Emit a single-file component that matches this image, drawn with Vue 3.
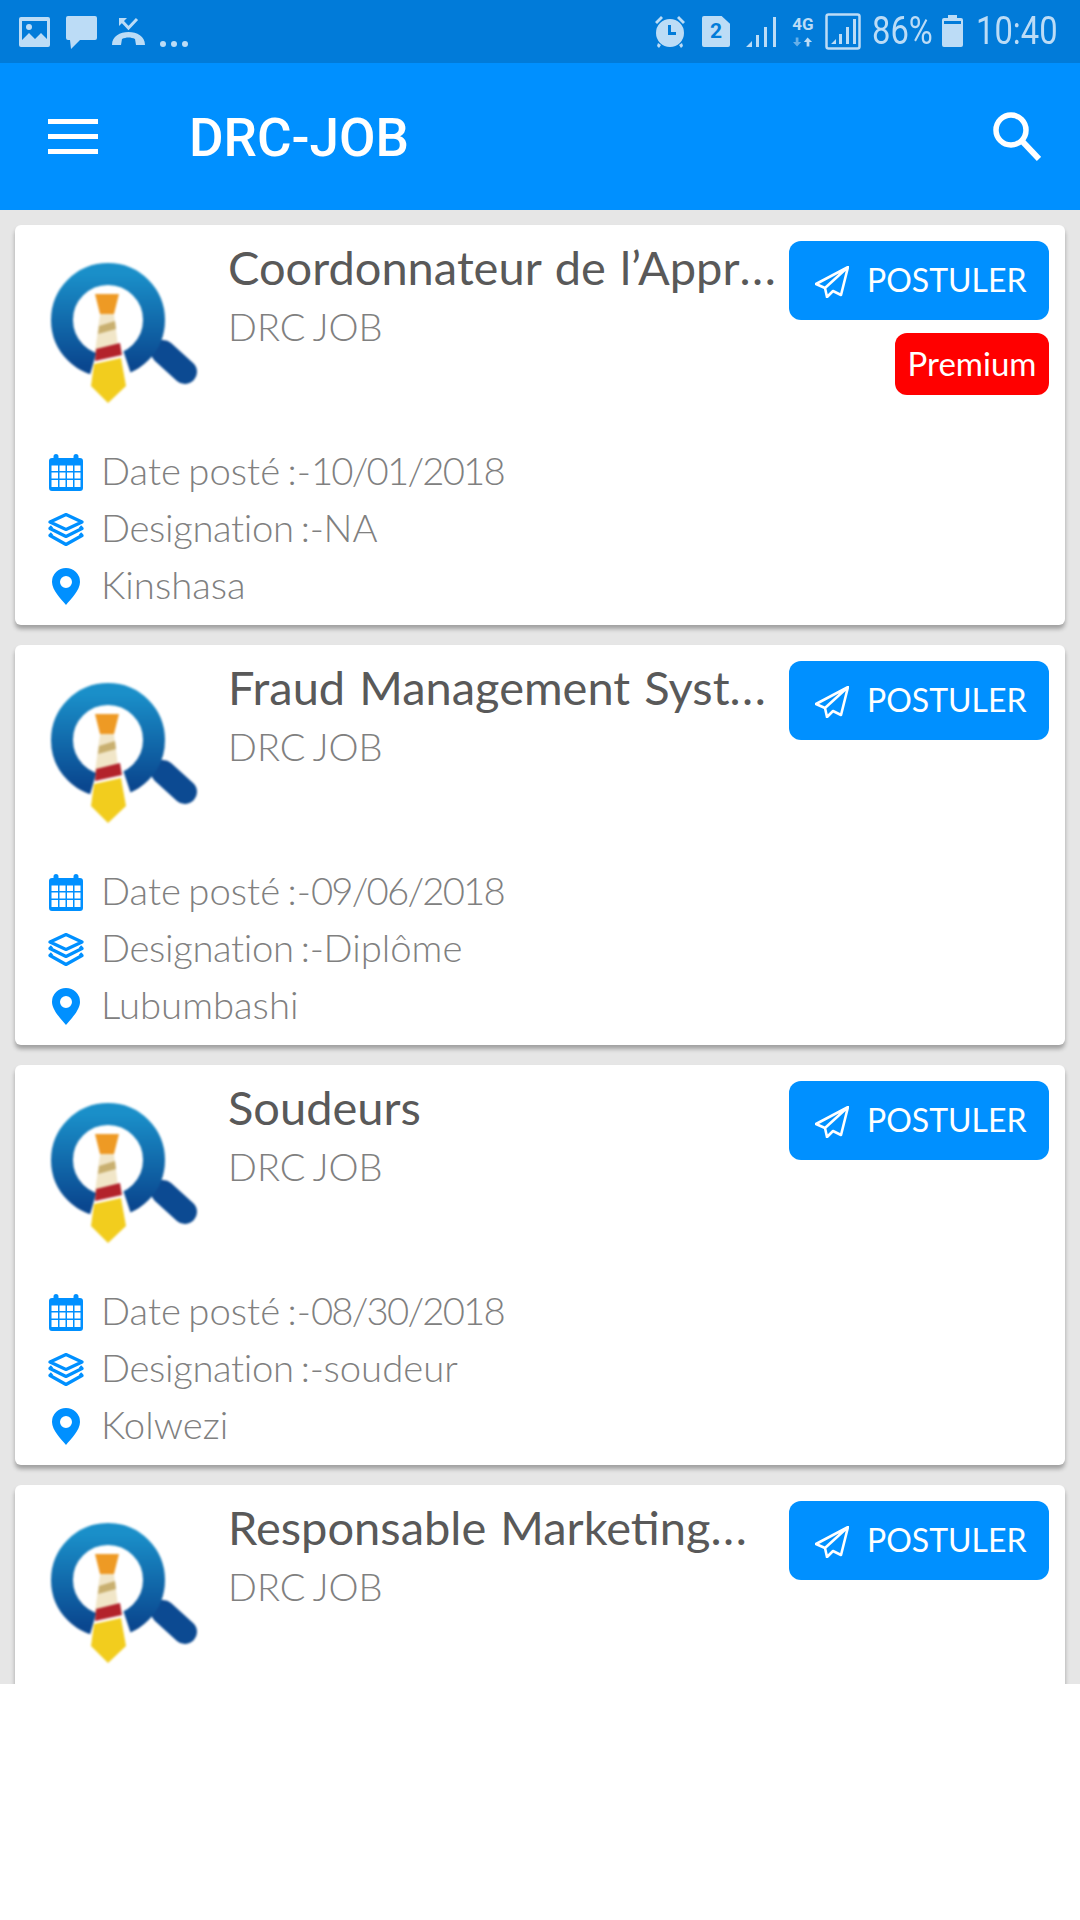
<script setup>
const jobs = [
  { id: 'a', title: 'Coordonnateur de l’Appr', more: true, date: '10/01/2018', designation: 'NA', city: 'Kinshasa', premium: true, rows: true },
  { id: 'b', title: 'Fraud Management Syst', more: true, date: '09/06/2018', designation: 'Diplôme', city: 'Lubumbashi', premium: false, rows: true },
  { id: 'c', title: 'Soudeurs', more: false, date: '08/30/2018', designation: 'soudeur', city: 'Kolwezi', premium: false, rows: true },
  { id: 'd', title: 'Responsable Marketing', more: true, premium: false, rows: false }
]
</script>

<template>
  <div class="screen">
    <div class="status">
      <div class="status-left">
        <svg class="s-pic" viewBox="0 0 31 30"><path fill-rule="evenodd" d="M2 0h27a2 2 0 0 1 2 2v26a2 2 0 0 1-2 2H2a2 2 0 0 1-2-2V2a2 2 0 0 1 2-2zM3 4v19l7-7 6 6 6-6 6 6V4z"/><circle cx="10" cy="10" r="3"/></svg>
        <svg class="s-msg" viewBox="0 0 31 33"><path d="M2 0h27a2 2 0 0 1 2 2v20a2 2 0 0 1-2 2H14l-9 9-1-9H2a2 2 0 0 1-2-2V2a2 2 0 0 1 2-2z"/></svg>
        <svg class="s-call" viewBox="0 0 33 29"><path d="M7 1h8l-8 8z"/><path d="M9 3l7.500 8L25 2" fill="none" stroke="#bcdcf6" stroke-width="3"/><path d="M0 28c0-9 8-13 16.500-13S33 19 33 28h-9l-1-6c-4-2-9-2-13 0l-1 6z"/></svg>
        <span class="dots"><i></i><i></i><i></i></span>
      </div>
      <div class="status-right">
        <svg class="s-alarm" viewBox="0 0 32 33"><path d="M1 7l6-6 2 2-6 6zM31 7l-6-6-2 2 6 6z"/><path fill-rule="evenodd" d="M16 4a14 14 0 1 1 0 28 14 14 0 0 1 0-28zM14 10v10h8v-3h-5v-7z"/><path d="M4 28l3 2-2 3-2-2zM28 28l-3 2 2 3 2-2z"/></svg>
        <span class="sim">2</span>
        <svg class="s-sig" viewBox="0 0 32 31"><path d="M0 31l6-6v6zM10 31V19h3v12zM18 31V11h3v20zM27 31V1h3v30z"/></svg>
        <span class="net"><b>4G</b><svg viewBox="0 0 22 10"><path class="dim" d="M3 0h3v5h3l-4.500 5L0 5h3z"/><path d="M16 0l5 5h-3v5h-3V5h-3z"/></svg></span>
        <svg class="s-box" viewBox="0 0 36 37"><rect x="1.500" y="1.500" width="33" height="34" rx="2" fill="none" stroke="#bcdcf6" stroke-width="2.500"/><path d="M6 31l5-5v5zM14 31V21h3v10zM21 31V14h3v17zM28 31V6h3v25z"/></svg>
        <span class="pct">86%</span>
        <svg class="s-bat" viewBox="0 0 21 32"><path fill-rule="evenodd" d="M6 0h9v3h4a2 2 0 0 1 2 2v25a2 2 0 0 1-2 2H2a2 2 0 0 1-2-2V5a2 2 0 0 1 2-2h4zM2 6v3h17V6z"/></svg>
        <span class="time">10:40</span>
      </div>
    </div>

    <header class="appbar">
      <button class="menu" aria-label="Menu"><i></i><i></i><i></i></button>
      <h1>DRC-JOB</h1>
      <svg class="search" viewBox="0 0 48 50"><circle cx="18" cy="18" r="15" fill="none" stroke="#fff" stroke-width="5.500"/><path d="M29 29l17 18" stroke="#fff" stroke-width="6" fill="none"/></svg>
    </header>

    <main class="list">
      <article v-for="job in jobs" :key="job.id" class="card">
        <div class="top">
          <svg class="logo" viewBox="0 0 170 190">
            <defs>
              <linearGradient :id="'ring' + job.id" x1="0" y1="0" x2="0" y2="1">
                <stop offset="0" stop-color="#1a8fc9"/>
                <stop offset="1" stop-color="#0a478f"/>
              </linearGradient>
            </defs>
            <g class="soft">
              <path d="M133 110l22 20" stroke="#0c4a92" stroke-width="24" stroke-linecap="round"/>
              <circle cx="78" cy="78" r="46" fill="none" :stroke="'url(#ring' + job.id + ')'" stroke-width="22"/>
              <path d="M55 150l13-45 2-58h16l6 58 15 45-28 20z" fill="#fff"/>
              <path d="M65 52h24l-5 20H70z" fill="#ee9a24"/>
              <path d="M70 72h14l4 32-23 6z" fill="#f1e6c8"/>
              <path d="M69 84l16-5 1 8-18 5z" fill="#c9b070"/>
              <path d="M66 107l24-6 2 12-27 6z" fill="#b3232b"/>
              <path d="M64 122l27-6 5 28-18 17-17-17z" fill="#f2cd1e"/>
            </g>
          </svg>
          <div class="info">
            <div class="title">{{ job.title }}<span v-if="job.more" class="more">...</span></div>
            <div class="company">DRC JOB</div>
          </div>
          <div class="actions">
            <button class="apply">
              <svg viewBox="0 0 34 32"><path d="M33 1L1 18l9 4zM33 1L10 22l2 9 6-6 8 4z" fill="none" stroke="#fff" stroke-width="2.600" stroke-linejoin="round"/></svg>
              <span>POSTULER</span>
            </button>
            <span v-if="job.premium" class="premium">Premium</span>
          </div>
        </div>
        <div v-if="job.rows" class="rows">
          <div class="row">
            <svg viewBox="0 0 34 37"><path fill-rule="evenodd" d="M7 0a2.500 2.500 0 0 1 2.500 2.500V4h15V2.500a2.500 2.500 0 0 1 5 0V4H31a3 3 0 0 1 3 3v27a3 3 0 0 1-3 3H3a3 3 0 0 1-3-3V7a3 3 0 0 1 3-3h1.500V2.500A2.500 2.500 0 0 1 7 0zM2.500 11.500v5.500h6.500v-5.500zm8 0v5.500h6v-5.500zm7.500 0v5.500h6v-5.500zm7.500 0v5.500h6v-5.500zM2.500 18.500v6h6.500v-6zm8 0v6h6v-6zm7.500 0v6h6v-6zm7.500 0v6h6v-6zM2.500 26v7h6.500v-7zm8 0v7h6v-7zm7.500 0v7h6v-7zm7.500 0v7h6v-7z"/></svg>
            <span>Date posté :-<span class="nums">{{ job.date }}</span></span>
          </div>
          <div class="row">
            <svg viewBox="0 0 36 34"><g fill="none" stroke="#0090ff" stroke-width="3.200" stroke-linejoin="round"><path d="M18 2l16 7.500L18 17 2 9.500z"/><path d="M4 14l-2 2 16 8 16-8-2-2"/><path d="M4 21l-2 2 16 9 16-9-2-2"/></g></svg>
            <span><span class="lbl">Designation :-</span>{{ job.designation }}</span>
          </div>
          <div class="row">
            <svg class="pin" viewBox="0 0 28 37"><path fill-rule="evenodd" d="M14 0a14 14 0 0 1 14 14c0 8-9 17-14 23C9 31 0 22 0 14A14 14 0 0 1 14 0zm0 8a6 6 0 1 0 0 12 6 6 0 0 0 0-12z"/></svg>
            <span>{{ job.city }}</span>
          </div>
        </div>
      </article>
    </main>
  </div>
</template>

<style>
html, body { margin: 0; background: #fff; }
</style>

<style scoped>
.screen { width: 1080px; height: 1684px; overflow: hidden; background: #e6e6e6; font-family: Lato, "Liberation Sans", sans-serif; }
.status { height: 63px; background: #017bd9; display: flex; justify-content: space-between; align-items: flex-start; box-sizing: border-box; color: #bcdcf6; }
.status svg { fill: #bcdcf6; display: block; flex: none; }
.status-left { display: flex; padding-left: 19px; align-items: flex-start; }
.s-pic { width: 31px; height: 30px; margin-top: 17px; }
.s-msg { width: 31px; height: 33px; margin: 16px 0 0 16px; }
.s-call { width: 33px; height: 29px; margin: 17px 0 0 15px; }
.dots { display: flex; gap: 5px; margin: 41px 0 0 15px; }
.dots i { width: 6px; height: 6px; border-radius: 50%; background: #bcdcf6; }
.status-right { display: flex; align-items: flex-start; padding-right: 22px; }
.s-alarm { width: 32px; height: 33px; margin-top: 15px; }
.sim { width: 28px; height: 31px; margin: 16px 0 0 16px; background: #bcdcf6; color: #017bd9; font: 700 21px/31px Roboto, sans-serif; text-align: center; clip-path: polygon(0 0, 70% 0, 100% 25%, 100% 100%, 0 100%); border-radius: 2px; }
.s-sig { width: 32px; height: 31px; margin: 16px 0 0 16px; }
.net { width: 26px; margin: 14px 0 0 12px; display: flex; flex-direction: column; align-items: center; }
.net b { font: 700 17px/20px Roboto, sans-serif; }
.net svg { width: 20px; height: 10px; margin-top: 3px; }
.net .dim { opacity: .55; }
.s-box { width: 36px; height: 37px; margin: 13px 0 0 9px; }
.pct, .time { font: 400 39px/63px Roboto, sans-serif; display: block; transform-origin: left center; transform: scaleX(.84); }
.pct { width: 60px; margin-left: 11px; white-space: nowrap; }
.s-bat { width: 21px; height: 32px; margin: 15px 0 0 10px; }
.time { width: 82px; margin-left: 13px; white-space: nowrap; }

.appbar { height: 147px; background: #0090ff; display: flex; align-items: center; color: #fff; }
.menu { width: 50px; height: 35px; margin-left: 48px; padding: 0; border: 0; background: none; display: flex; flex-direction: column; justify-content: space-between; margin-top: -1px; }
.menu i { display: block; height: 5px; background: #fff; }
h1 { flex: 1; margin: 4px 0 0 91px; font: 500 53px/1 Roboto, sans-serif; }
.search { width: 48px; height: 50px; margin: 1px 39px 0 0; }

.list { padding: 15px 15px 0; display: flex; flex-direction: column; gap: 20px; }
.card { background: #fff; border-radius: 6px; box-shadow: 0 4px 4px rgba(0, 0, 0, .3); padding: 15px 16px 13px 15px; flex: none; }
.top { display: flex; height: 203px; }
.logo { width: 170px; height: 190px; margin-top: 2px; flex: none; }
.soft { filter: blur(1.2px); }
.info { flex: 1; min-width: 0; margin: 0 6px 0 28px; }
.title { font-size: 47px; line-height: 55px; color: #595959; white-space: nowrap; word-spacing: 2px; }
.more { letter-spacing: 1.500px; }
.company { font-size: 38px; font-weight: 300; line-height: 63px; color: #808080; word-spacing: -2px; }
.actions { width: 260px; flex: none; display: flex; flex-direction: column; align-items: flex-end; padding-top: 1px; }
.apply { width: 260px; height: 79px; border: 0; border-radius: 12px; background: #0090ff; color: #fff; display: flex; align-items: center; padding: 0 0 0 26px; font: 400 32px Lato, sans-serif; }
.apply svg { width: 34px; height: 32px; margin: 3px 18px 0 0; }
.apply span { margin-top: -2px; }
.premium { margin-top: 13px; width: 154px; height: 62px; box-sizing: border-box; background: #f00; color: #fff; border-radius: 12px; font-size: 33px; line-height: 60px; text-align: center; }
.rows { display: flex; flex-direction: column; margin-top: -2px; }
.row { height: 57px; display: flex; align-items: center; color: #808080; font-size: 38.300px; font-weight: 300; word-spacing: -3px; padding-left: 18px; }
.nums { font-variant-numeric: tabular-nums; letter-spacing: -1.800px; }
.lbl { letter-spacing: -.35px; }
.row svg { width: 36px; height: 37px; fill: #0090ff; flex: none; margin: 5px 17px 0 0; }
</style>
